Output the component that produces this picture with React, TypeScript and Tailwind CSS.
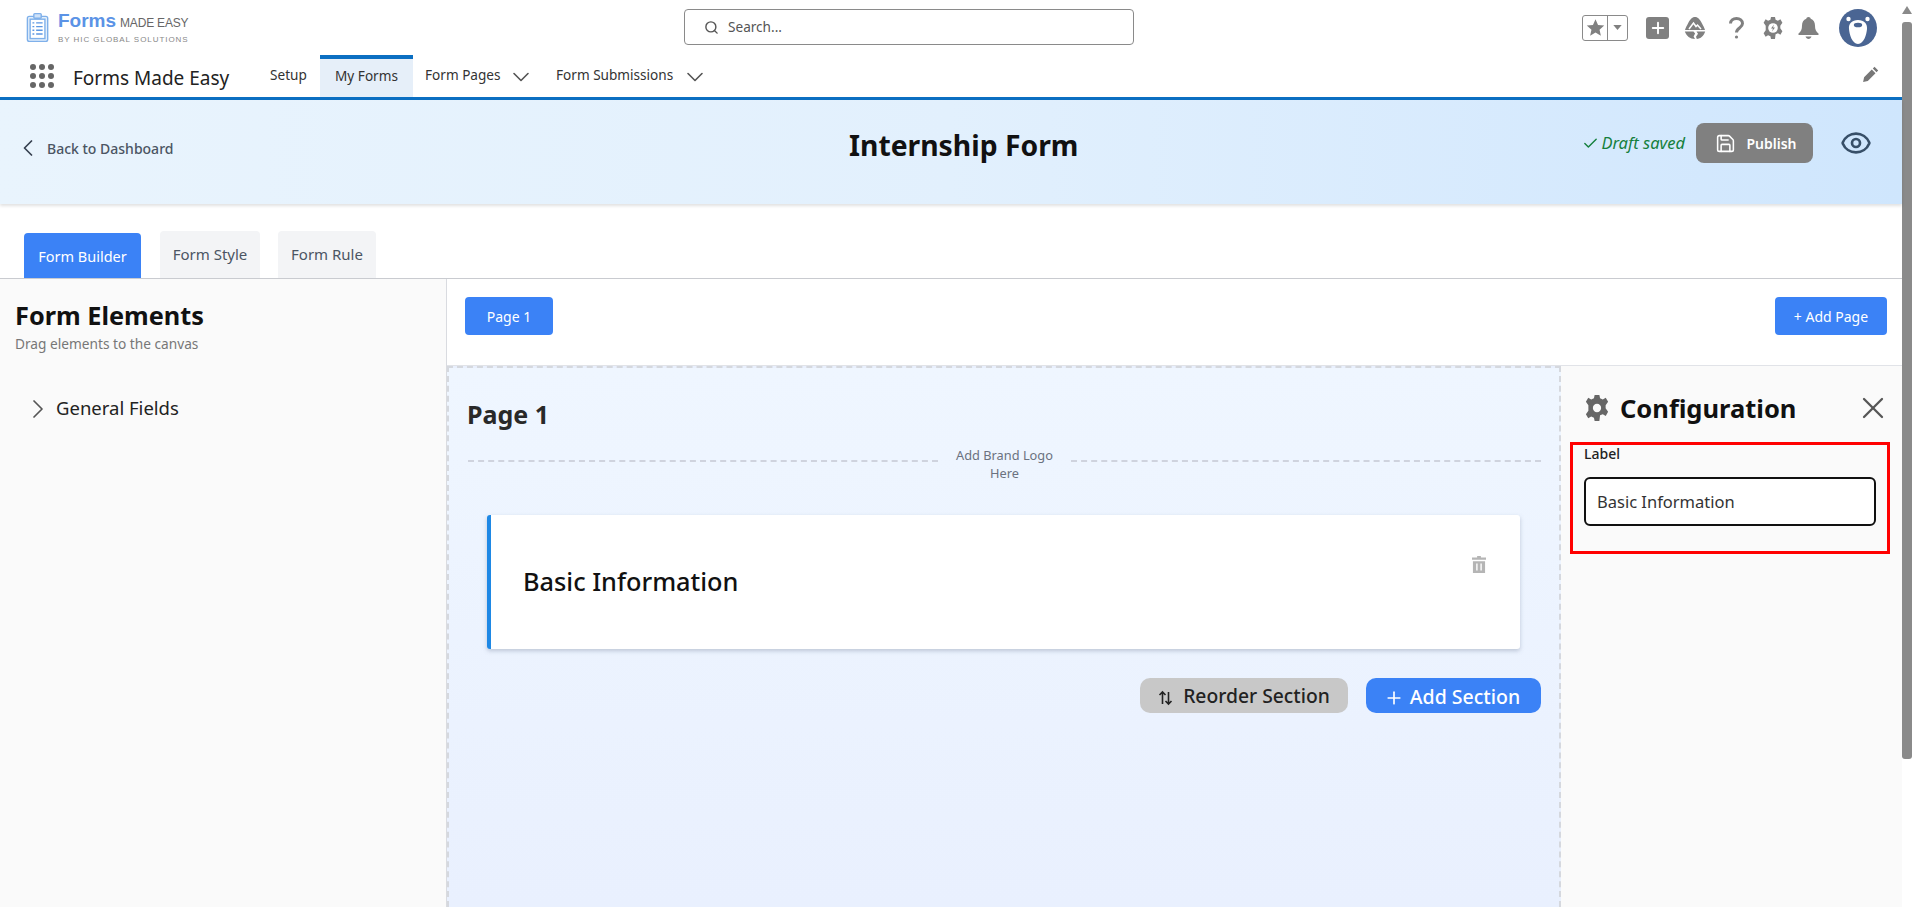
import { Check, ChevronDown, ChevronLeft, ChevronRight, Eye, Plus, Save, Search, X } from 'lucide-react';

const FONT = "font-['Noto_Sans','Open_Sans',sans-serif]";

function Logo() {
  return (
    <div className="flex items-center gap-2">
      <svg className="w-[24px] h-[31px]" viewBox="0 0 26 32" fill="none" stroke="#7fb0ea" strokeWidth="1.5">
        <rect x="1.5" y="4" width="22" height="27" rx="2" fill="#e3effb" />
        <rect x="4.5" y="7" width="16" height="21" fill="#fff" />
        <rect x="8.5" y="1" width="8" height="5" rx="1" fill="#cfe2f8" />
        <path d="M7 11h2M11 11h7M7 15h2M11 15h7M7 19h2M11 19h7M7 23h2M11 23h7" stroke="#5c97e3" />
      </svg>
      <div className="flex flex-col font-['Liberation_Sans',sans-serif]">
        <div className="flex items-baseline leading-[22px]">
          <span className="text-[19px] font-bold text-[#5b93e6]">Forms</span>
          <span className="ml-[4px] text-[12px] text-[#666] tracking-[-0.2px]">MADE EASY</span>
        </div>
        <span className="mt-[1px] text-[8px] leading-[10px] text-[#888] tracking-[0.94px] whitespace-nowrap">BY HIC GLOBAL SOLUTIONS</span>
      </div>
    </div>
  );
}

function GlobalActions() {
  return (
    <div className="flex items-center">
      <div className="w-[46px] h-[26px] flex border border-[#8a8a8a] rounded-[3px]">
        <div className="w-[25px] border-r border-[#8a8a8a] flex items-center justify-center">
          <svg className="w-[19px] h-[19px]" viewBox="0 0 24 24" fill="#808080">
            <path d="M12 1.500l3.200 7.200 7.800.8-5.900 5.200 1.700 7.700L12 18.400l-6.800 4 1.700-7.700L1 9.500l7.800-.8z" />
          </svg>
        </div>
        <div className="flex-1 flex items-center justify-center">
          <svg className="w-[9px] h-[5px]" viewBox="0 0 10 6" fill="#808080">
            <path d="M0 0h10L5 6z" />
          </svg>
        </div>
      </div>
      <div className="ml-[18px] w-[23px] h-[22px] bg-[#808080] rounded-[3px] flex items-center justify-center">
        <Plus className="w-[18px] h-[18px] text-white" strokeWidth={2.5} />
      </div>
      <svg className="ml-[15px] w-[22px] h-[22px]" viewBox="0 0 22 22" fill="#808080">
        <path d="M11 0c3 0 5 2.500 7 6.500 1.200 2.300 2.500 4.500 3 6.500H1c.5-2 1.800-4.200 3-6.500C6 2.500 8 0 11 0z" />
        <path d="M.8 14.500h8.700l1.600 2-1.500 3 1.400 2.500C6 22 2.400 19 .8 14.500zM12.500 14.500h8.700c-1.400 4.400-4.600 7.200-8.400 7.500l-.8-2.200 2-3z" />
        <path d="M5 12l4.500-6 2.500 3.500 1.500-1.500 3.500 4" fill="none" stroke="#fff" strokeWidth="1.500" />
      </svg>
      <svg className="ml-[23px] w-[15px] h-[22px]" viewBox="0 0 15 22" fill="none" stroke="#808080" strokeWidth="3">
        <path d="M1.500 6.500C1.500 3.500 4 1.500 7.500 1.500s6 2 6 5c0 4.500-6 4.500-6 9" />
        <circle cx="7.500" cy="20" r="1.600" fill="#808080" stroke="none" />
      </svg>
      <svg className="ml-[19px] w-[20px] h-[22px]" viewBox="0 0 20 22" fill="#808080">
        <path d="M8 0h4l.6 2.800 2.300 1 2.500-1.500 2 3.500-2.100 2.900v2.600l2.100 2.900-2 3.500-2.500-1.500-2.300 1L12 22H8l-.6-2.800-2.300-1-2.500 1.500-2-3.500 2.100-2.900V8.700L.6 5.800l2-3.500 2.500 1.500 2.300-1z" />
        <circle cx="10" cy="11" r="4.800" fill="#fff" />
        <path d="M11 7.500L8 11.500h2l-1 3 3-4h-2z" />
      </svg>
      <svg className="ml-[15px] w-[21px] h-[22px]" viewBox="0 0 21 22" fill="#808080">
        <path d="M10.500 0c1.300 0 2 .8 2.200 1.800C15.500 2.800 17 5.300 17 8.500c0 4 1 6 3.500 8v1.500H.5v-1.500C3 14.500 4 12.500 4 8.500c0-3.200 1.500-5.700 4.300-6.700C8.500.8 9.200 0 10.500 0z" />
        <path d="M7.500 19.500h6c-.5 1.500-1.700 2.500-3 2.500s-2.500-1-3-2.500z" />
      </svg>
      <svg className="ml-[20px] w-[38px] h-[38px]" viewBox="0 0 38 38">
        <circle cx="19" cy="19" r="19" fill="#4a6593" />
        <circle cx="9.500" cy="10" r="2.200" fill="#fff" />
        <circle cx="28.500" cy="10" r="2.200" fill="#fff" />
        <path d="M19 11c6 0 9.500 3.500 9 9-.4 5-3 15-9 15s-8.600-10-9-15c-.5-5.500 3-9 9-9z" fill="#fff" />
        <ellipse cx="19" cy="16" rx="4.200" ry="2.300" fill="#4a6593" />
      </svg>
    </div>
  );
}

function TopNav() {
  return (
    <div className="h-[42px] flex items-stretch border-b-[3px] border-[#0b6fc2] box-content">
      <div className="w-[73px] flex items-center pl-[30px]">
        <div className="grid grid-cols-3 gap-x-[3px] gap-y-[3px]">
          {[0, 1, 2, 3, 4, 5, 6, 7, 8].map((i) => (
            <span key={i} className="w-[6px] h-[6px] rounded-full bg-[#666]" />
          ))}
        </div>
      </div>
      <div className="w-[197px] flex items-center text-[19px] text-[#222] whitespace-nowrap pt-[5px]">Forms Made Easy</div>
      <div className="w-[50px] flex items-center text-[13.600px] text-[#333] pb-[1px]">Setup</div>
      <div className="w-[93px] bg-[#e6eff9] border-t-[4px] border-[#0b6fc2] flex items-center justify-center text-[13.600px] text-[#333] pb-[3px]">My Forms</div>
      <div className="ml-[12px] w-[131px] flex items-center text-[13.600px] text-[#333] pb-[1px]">
        <span className="w-[82px] whitespace-nowrap">Form Pages</span>
        <ChevronDown className="w-[28px] h-[28px] text-[#555] mt-[3px]" strokeWidth={1.4} />
      </div>
      <div className="flex items-center text-[13.600px] text-[#333] pb-[1px]">
        <span className="w-[125px] whitespace-nowrap">Form Submissions</span>
        <ChevronDown className="w-[28px] h-[28px] text-[#555] mt-[3px]" strokeWidth={1.4} />
      </div>
      <div className="flex-1 flex items-center justify-end pr-[23px] pb-[4px]">
        <svg className="w-[16px] h-[16px]" viewBox="0 0 16 16" fill="#777">
          <path d="M11.500.8l3.700 3.700-1.700 1.700-3.700-3.700zM8.800 3.500l3.700 3.700-7.700 7.700-4.700 1 1-4.700z" />
        </svg>
      </div>
    </div>
  );
}

function Banner() {
  return (
    <div className="h-[104px] relative flex items-center justify-between bg-gradient-to-r from-[#e9f4fd] via-[#e2f0fd] to-[#cfe6fd] shadow-[0_2px_3px_rgba(0,0,0,0.12)] pl-[14px] pr-[30px]">
      <div className="flex items-center gap-[5px] pb-[8px] text-[14px] font-medium text-[#4b5563]">
        <ChevronLeft className="w-[28px] h-[28px] text-[#374151]" strokeWidth={1.5} />
        <span>Back to Dashboard</span>
      </div>
      <h1 className="absolute left-[849px] top-[20px] text-[28.300px] leading-[50px] font-bold text-[#111] whitespace-nowrap">Internship Form</h1>
      <div className="flex items-center pb-[18px]">
        <Check className="w-[17px] h-[17px] text-[#15803d]" />
        <span className="ml-[2px] text-[16.500px] italic text-[#15803d] whitespace-nowrap">Draft saved</span>
        <button className="ml-[11px] w-[117px] h-[40px] bg-[#808080] rounded-[8px] flex items-center justify-center gap-[10px] pl-[3px] text-[14px] font-semibold text-white">
          <Save className="w-[21px] h-[21px]" strokeWidth={1.75} />
          Publish
        </button>
        <Eye className="ml-[27px] w-[32px] h-[32px] text-[#374f68]" strokeWidth={2} />
      </div>
    </div>
  );
}

function BuilderTabs() {
  return (
    <div className="h-[74px] flex items-end pl-[24px] gap-[18px] border-b border-[#c9cbd0] box-content">
      <button className="w-[117px] h-[45px] bg-[#3b82f6] rounded-t-[4px] text-[14.500px] text-white pt-[2px]">Form Builder</button>
      <button className="ml-[1px] w-[100px] h-[47px] bg-[#f3f4f6] rounded-t-[4px] text-[15px] text-[#4b5563]">Form Style</button>
      <button className="w-[98px] h-[47px] bg-[#f3f4f6] rounded-t-[4px] text-[15px] text-[#4b5563]">Form Rule</button>
    </div>
  );
}

function Sidebar() {
  return (
    <aside className="w-[447px] shrink-0 bg-[#fafafa] border-r border-[#d9dbe0] pl-[15px] pt-[18px]">
      <h2 className="text-[25.300px] leading-[36px] font-bold text-[#111]">Form Elements</h2>
      <p className="mt-[2px] text-[13.700px] leading-[18px] text-[#777]">Drag elements to the canvas</p>
      <div className="mt-[38px] flex items-center pl-[7px] gap-[2px] text-[18.500px] text-[#222]">
        <ChevronRight className="w-[32px] h-[32px] text-[#555] mt-[2px]" strokeWidth={1.3} />
        <span>General Fields</span>
      </div>
    </aside>
  );
}

function Canvas() {
  return (
    <div className="flex-1 min-w-0 bg-gradient-to-b from-[#eff6ff] to-[#e9f0fe] border-x-2 border-t-[2px] border-dashed border-[#d5d8de] pl-[19px] pr-[18px] pt-[28px]">
      <h2 className="-ml-[1px] text-[25px] leading-[36px] font-bold text-[#292929]">Page 1</h2>
      <div className="mt-[14px] flex items-center">
        <div className="flex-1 mb-[6px] border-t-2 border-dashed border-[#cfd3de]" />
        <div className="w-[133px] text-center text-[12.800px] leading-[18px] text-[#6b7280]">
          Add Brand Logo
          <br />
          Here
        </div>
        <div className="flex-1 mb-[6px] border-t-2 border-dashed border-[#cfd3de]" />
      </div>
      <div className="mt-[33px] ml-[19px] mr-[21px] h-[134px] bg-white border-l-[4px] border-[#1e88e5] rounded-[3px] shadow-[0_2px_4px_rgba(100,116,139,0.35)] flex justify-between">
        <div className="pl-[32px] flex items-center text-[25.300px] font-medium text-[#111]">Basic Information</div>
        <svg className="w-[14px] h-[17px] mt-[41px] mr-[34px]" viewBox="0 0 15 18" fill="#b5b5b5">
          <path d="M5.500 0h4v1.500h5.500v2.500H0V1.500h5.500z" />
          <path fillRule="evenodd" d="M1 5.500h13V18H1zM4.500 8v7.500h1.500V8zM9 8v7.500h1.500V8z" />
        </svg>
      </div>
      <div className="mt-[29px] flex justify-end gap-[18px]">
        <button className="w-[208px] h-[35px] pt-[2px] bg-[#c8c8c8] rounded-[10px] flex items-center justify-center gap-[10px] text-[19.300px] font-medium text-[#222]">
          <svg className="w-[15px] h-[16px] mt-[3px]" viewBox="0 0 15 16" fill="none" stroke="#222" strokeWidth="1.600">
            <path d="M4.500 14V2M1.500 5l3-3 3 3M10.500 2v12M7.500 11l3 3 3-3" />
          </svg>
          Reorder Section
        </button>
        <button className="w-[175px] h-[35px] pt-[2px] bg-[#3b82f6] rounded-[10px] flex items-center justify-center gap-[6px] pr-[3px] text-[19.500px] font-medium text-white">
          <Plus className="w-[20px] h-[20px] mt-[2px]" strokeWidth={2} />
          Add Section
        </button>
      </div>
    </div>
  );
}

function ConfigPanel() {
  return (
    <aside className="w-[341px] shrink-0 bg-[#fafafa] relative pt-[24px]">
      <div className="flex items-center pl-[24px] pr-[11px]">
        <svg className="w-[24px] h-[26px]" viewBox="0 0 20 22" fill="#666">
          <path fillRule="evenodd" d="M8 0h4l.6 2.800 2.300 1 2.500-1.500 2 3.500-2.100 2.900v2.600l2.100 2.900-2 3.500-2.500-1.500-2.300 1L12 22H8l-.6-2.800-2.300-1-2.500 1.500-2-3.500 2.100-2.900V8.700L.6 5.800l2-3.500 2.500 1.500 2.300-1zM10 7.500a3.500 3.500 0 100 7 3.500 3.500 0 000-7z" />
        </svg>
        <h2 className="ml-[11px] flex-1 text-[25.500px] leading-[36px] font-bold text-[#111]">Configuration</h2>
        <X className="w-[36px] h-[36px] text-[#555]" strokeWidth={1.5} />
      </div>
      <div className="mt-[16px] ml-[9px] w-[320px] h-[112px] border-[3px] border-[#f00] pl-[11px] pr-[11px]">
        <label className="block text-[14px] leading-[18px] font-medium text-[#222]">Label</label>
        <input
          readOnly
          value="Basic Information"
          className="mt-[14px] w-full h-[49px] bg-white border-2 border-[#111] rounded-[6px] px-[11px] text-[16.500px] text-[#333] outline-none"
        />
      </div>
    </aside>
  );
}

export default function App() {
  return (
    <div className={`${FONT} w-[1912px] h-[907px] overflow-hidden flex bg-white`}>
      <div className="w-[1902px] shrink-0 flex flex-col">
        <div className="h-[55px] flex items-center pl-[26px] pr-[25px] justify-between relative">
          <Logo />
          <div className="absolute left-[684px] top-[9px] w-[450px] h-[36px] border border-[#8a8a8a] rounded-[4px] flex items-center pl-[19px] gap-[9px] text-[13.600px] text-[#555]">
            <Search className="w-[15px] h-[15px] text-[#555]" strokeWidth={2.25} />
            <span>Search...</span>
          </div>
          <GlobalActions />
        </div>
        <TopNav />
        <Banner />
        <BuilderTabs />
        <div className="flex-1 min-h-0 flex">
          <Sidebar />
          <div className="flex-1 min-w-0 flex flex-col">
            <div className="h-[87px] shrink-0 flex justify-between pl-[18px] pr-[15px] pt-[18px] border-b border-[#e1e3e8]">
              <button className="w-[88px] h-[38px] bg-[#3b82f6] rounded-[4px] text-[14px] text-white">Page 1</button>
              <button className="w-[112px] h-[38px] bg-[#3b82f6] rounded-[4px] text-[14px] text-white">+ Add Page</button>
            </div>
            <div className="flex-1 min-h-0 flex">
              <Canvas />
              <ConfigPanel />
            </div>
          </div>
        </div>
      </div>
      <div className="w-[10px] shrink-0 flex flex-col items-center bg-white">
        <svg className="mt-[5px] w-[10px] h-[10px]" viewBox="0 0 10 10" fill="#8a8a8a">
          <path d="M5 1l5 8H0z" />
        </svg>
        <div className="mt-[7px] w-[10px] h-[737px] bg-[#8a8a8a] rounded-[3px]" />
      </div>
    </div>
  );
}
